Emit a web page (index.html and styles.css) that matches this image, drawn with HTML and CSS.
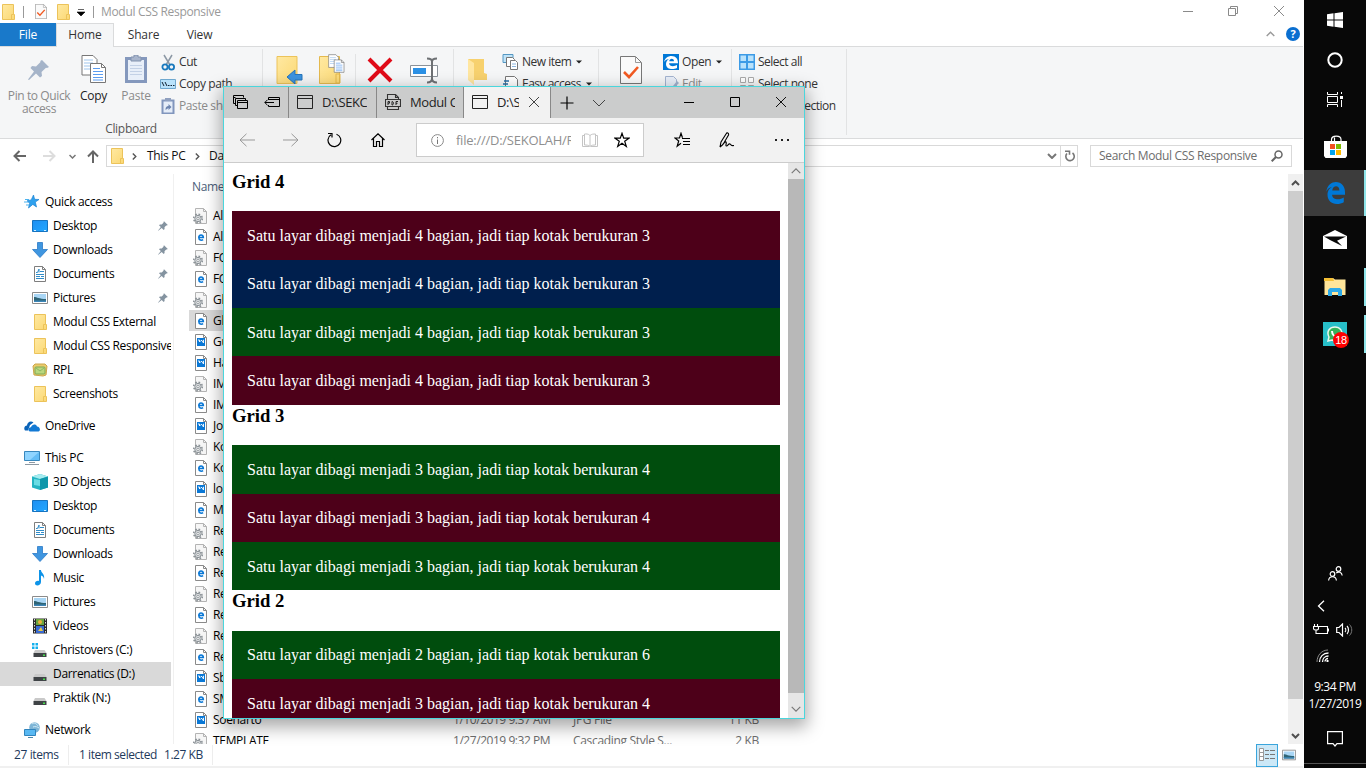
FILE: index.html
```html
<!DOCTYPE html>
<html lang="en">
<head>
<meta charset="utf-8">
<title>Modul CSS Responsive</title>
<link rel="stylesheet" href="styles.css">
</head>
<body>
<svg class="defs" width="0" height="0">
  <linearGradient id="gold" x1="0" y1="0" x2="1" y2="1"><stop offset="0" stop-color="#ffe9a2"/><stop offset="1" stop-color="#fbd873"/></linearGradient>
  <linearGradient id="blue" x1="0" y1="0" x2="1" y2="1"><stop offset="0" stop-color="#1d8ff2"/><stop offset="1" stop-color="#22a7ff"/></linearGradient>
  <symbol id="folder" viewBox="0 0 16 16"><path d="M2.500.5h11v10h1v5h-12z" fill="url(#gold)" stroke="#ecc35a"/><path d="M11.500 15V10.500h2" fill="none" stroke="#ecc35a"/></symbol>
  <symbol id="star" viewBox="0 0 16 16"><path d="M9.500 1l1.100 4.300 4.400.2-3.700 2.600 1.200 4.900-3.700-2.600L4.500 14l1.200-4.700L3 6.800l4.200-.9z" fill="#2ea1ee" stroke="#1b83d3" stroke-width=".7"/><path d="M1 5.500h4M0 8h4M2 11h3" stroke="#4cb2ee" fill="none"/></symbol>
  <symbol id="desk" viewBox="0 0 16 16"><path d="M.5 2.500h15v11H.5z" fill="url(#blue)" stroke="#1673bf"/><path d="M2 12.500h2M12 12.500h2" stroke="#d5efff"/></symbol>
  <symbol id="down" viewBox="0 0 16 16"><path d="M5.500.5h5v7h5L8 15.500.5 7.500h5z" fill="#3f96e0" stroke="#2b7ac6" stroke-width=".8"/></symbol>
  <symbol id="doc" viewBox="0 0 16 16"><path d="M2.500.5h8l3 3v12h-11z" fill="#fff" stroke="#7e7e7e"/><path d="M10.500.5v3h3" fill="none" stroke="#7e7e7e"/><path d="M4 6.500h1.500L7 3v3.500M8 5.500h4M4 8.500h8M4 10.500h4M4 12.500h8M9 10.500h3" stroke="#318cc8" fill="none"/></symbol>
  <symbol id="pic" viewBox="0 0 16 16"><path d="M.5 2.500h15v11H.5z" fill="#fff" stroke="#8b8b8b"/><path d="M2 4h12v8H2z" fill="#a9d6f5"/><path d="M2 7c3 0 5 2 12 2v3H2z" fill="#2f6475"/><path d="M2 10.500h12V12H2z" fill="#3c86b8"/></symbol>
  <symbol id="rpl" viewBox="0 0 16 16"><path d="M1 4l2-2h10l2 2-1 9-3 1-9-1z" fill="#eacb6c" stroke="#cca64a"/><rect x="3" y="5" width="10" height="7" rx="1" fill="#b9d77e" stroke="#7eaa55"/><path d="M4 6l4 3 4-3" fill="none" stroke="#8cb765"/></symbol>
  <symbol id="cloud" viewBox="0 0 16 16"><path d="M1 12.500C-.8 10 1 7.500 3 7.500 3 4 7 2 9.500 4.500L6 7l-2 5.500z" fill="#0a63b8"/><path d="M6 13.500C3.500 13 4 9 7 9.200 8 6 12 5.500 13 8.500c3 .2 4 4 1.500 5z" fill="#1279d4"/></symbol>
  <symbol id="pc" viewBox="0 0 16 16"><path d="M.5 1.500h15v9H.5z" fill="#64bdf6" stroke="#3887bd"/><path d="M1 2h14L6 10H1z" fill="#8fd4ff"/><path d="M1 14.500h14M5 12.500h6" stroke="#8d99a3"/></symbol>
  <symbol id="cube" viewBox="0 0 16 16"><path d="M8 0l8 2.500v11L8 16l-8-2.500v-11z" fill="#24b4c2"/><path d="M8 0l8 2.500L8 5 0 2.500z" fill="#a6ecf0"/><path d="M8 5l8-2.500v11L8 16z" fill="#0e97ab"/><path d="M2 5l6 1v6l-6-1z" fill="#69dce4"/></symbol>
  <symbol id="note" viewBox="0 0 16 16"><path d="M7 0h2c0 3 4 3.500 3 9-.5-2.500-1.500-3-3-3.500V12c0 4-6 4.500-6 1.500 0-2 2-3 4-2.500z" fill="#0d93e8"/></symbol>
  <symbol id="film" viewBox="0 0 16 16"><path d="M1 .5h14v15H1z" fill="#2a2a2a"/><path d="M4 1h8v6H4z" fill="#6aa43f"/><path d="M4 8h8v7H4z" fill="#376ad4"/><circle cx="8" cy="4" r="2" fill="#eab13b"/><path d="M6 13l3-4 2 4z" fill="#e6c64a"/><path d="M2.500 1v14M13.500 1v14" stroke="#ddd" stroke-dasharray="1.500 1.500"/></symbol>
  <symbol id="drive" viewBox="0 0 16 16"><path d="M3 7h9.500l2 3h-13z" fill="#c9c9c9"/><path d="M1.500 10h13v4h-13z" fill="#3f4346"/><path d="M11 11.500h2V13h-2z" fill="#47e04d"/></symbol>
  <symbol id="cdrive" viewBox="0 0 16 16"><use href="#drive"/><path d="M0 0h2.500v2.500H0zM3.500 0H6v2.500H3.500zM0 3.500h2.500V6H0zM3.500 3.500H6V6H3.500z" fill="#14b0ee"/></symbol>
  <symbol id="net" viewBox="0 0 16 16"><circle cx="10.500" cy="5.500" r="5.300" fill="#7eb5d6"/><path d="M8 2c2-2 5 0 6 2M9 5c2-1 5 0 6 1" stroke="#d3ebf5" fill="none"/><path d="M.5 7.500h11v6H.5z" fill="#58b8f2" stroke="#3184bd"/><path d="M4 15.500h5" stroke="#4a86aa"/></symbol>
  <symbol id="pin" viewBox="0 0 10 10"><path d="M6 .2L9.800 4l-1 .5-.6-.1-1.700 1.800.1 1.800-.9.900-2-2L.3 9.800l-.2-.2 2.700-3.600L1 4.200l.9-.8 1.800.1L5.500 1.800l0-.9z" fill="#8493a0"/></symbol>
  <symbol id="page" viewBox="0 0 16 16"><path d="M2.500.5h8l3 3v12h-11z" fill="#fff" stroke="#8a8a8a"/><path d="M10.500.5v3h3" fill="none" stroke="#8a8a8a"/></symbol>
  <symbol id="gear" viewBox="0 0 16 16"><path d="M2.500.5h8l3 3v12h-11z" fill="#f6f6f6" stroke="#b4b4b4"/><path d="M10.500.5v3h3" fill="none" stroke="#b4b4b4"/><circle cx="5" cy="10.500" r="4.300" fill="none" stroke="#8b9297" stroke-width="1.600" stroke-dasharray="1.700 1.677"/><circle cx="5" cy="10.500" r="3.200" fill="#d7dadc" stroke="#8b9297"/><circle cx="5" cy="10.500" r="1.200" fill="#fff" stroke="#8b9297" stroke-width=".8"/></symbol>
  <symbol id="ef" viewBox="0 0 16 16"><use href="#page"/><path d="M6.200 8.500h4.100C10.300 5 5.800 5.200 5.800 8.600c0 3 3 3 4.300 2" fill="none" stroke="#0a78d6" stroke-width="1.600"/></symbol>
  <symbol id="img" viewBox="0 0 16 16"><use href="#page"/><path d="M4 4h8v8H4z" fill="#0a78d6"/><path d="M5 6h1.500v2L8 6.500h1L10.500 9V6H11" fill="none" stroke="#fff" stroke-width=".9"/></symbol>
  <symbol id="edge" viewBox="0 0 24 24"><path d="M1.500 10.500C3 3 8 0 13 0c7 0 11 5 11 11v2.800H8.500c.3 3.700 3.600 5 6.800 5 2.800 0 5-.8 7.200-2v5.300c-2.500 1.400-5 1.900-8.200 1.900C7.500 24 3 20 3 14c0-4.500 2.700-7.500 6-8.700-4 .6-6.300 3-7.500 5.200zm7.200-1.300h8.600c0-6.600-8.200-5.700-8.600 0z" fill="#0078d7"/></symbol>
  <symbol id="caret" viewBox="0 0 6 4"><path d="M0 .5h6L3 3.500z" fill="#222"/></symbol>
  <symbol id="copies" viewBox="0 0 26 28"><path d="M1 .5h11l4 4V20H1z" fill="#fff" stroke="#777"/><path d="M3 5h9M3 8h9M3 11h9M3 14h9" stroke="#9fc5ec"/><path d="M9.500 8.500h11l4 4v15h-15z" fill="#fff" stroke="#777"/><path d="M20.500 8.500v4h4" fill="none" stroke="#777"/><path d="M12 13.500h7M12 16.500h10M12 19.500h10M12 22.500h10M12 25h10" stroke="#5a9cf0"/></symbol>
  <symbol id="win" viewBox="0 0 16 14"><path d="M.5.5h15v13H.5zM.5 3.500h15" fill="none" stroke="#222"/></symbol>
  <symbol id="x" viewBox="0 0 12 12"><path d="M1 1l10 10M11 1L1 11" fill="none" stroke="currentColor"/></symbol>
  <symbol id="right" viewBox="0 0 16 14"><path d="M0 7h15M8.500.8L15 7l-6.500 6.200" fill="none" stroke="currentColor"/></symbol>
  <symbol id="chev" viewBox="0 0 14 8"><path d="M1 1l6 6 6-6" fill="none" stroke="currentColor"/></symbol>
  <symbol id="sheet" viewBox="0 0 22 28"><path d="M.5.5h15l6 6v21H.5z" fill="#fafafa" stroke="#777"/><path d="M15.500.5v6h6" fill="none" stroke="#999"/><path d="M4 16l5 5 9-10" fill="none" stroke="#f15a22" stroke-width="2.600"/></symbol>
</svg>

<div class="screen">
<main class="explorer">
  <header class="title">
    <svg class="i16"><use href="#folder"/></svg><i class="bar"></i>
    <svg class="quick" width="12" height="15"><use href="#sheet"/></svg>
    <svg class="i16 qf"><use href="#folder"/></svg>
    <svg class="more" width="8" height="7" viewBox="0 0 8 7"><path d="M1 .5h6M0 3h8L4 7z" stroke="#000" stroke-width=".6"/></svg><i class="bar b2"></i>
    <span class="t-title">Modul CSS Responsive</span>
    <span class="wbtns"><svg width="10" height="10"><path d="M0 5.500h10" stroke="#8a8a8a"/></svg><svg width="10" height="10"><path d="M.5 2.500h7v7h-7zM2.500 2.500v-2h7v7h-2" fill="none" stroke="#8a8a8a"/></svg><svg width="12" height="12" class="grey"><use href="#x"/></svg></span>
  </header>
  <nav class="tabs">
    <span class="file">File</span><span class="home">Home</span><span class="share">Share</span><span class="view">View</span>
    <span class="help"><svg width="9" height="6" viewBox="0 0 9 6"><path d="M.7 5L4.500 1.200 8.300 5" fill="none" stroke="#999" stroke-width="1.400"/></svg><b>?</b></span>
  </nav>
  <section class="ribbon">
    <div class="clip">
      <div class="tools">
        <div class="big pinq dim"><svg width="22" height="28" viewBox="0 0 22 28"><path d="M14 5l7 7-2 1-1-.3-4.500 4.300.5 4-2 1.500-4-4L1 25l-1-.5 6-8L2.500 13l1.500-2 4 .5L12.500 7l-.2-1z" fill="#a5b4c9"/></svg><span>Pin to Quick<br>access</span></div>
        <div class="big cp"><svg width="26" height="28"><use href="#copies"/></svg><span>Copy</span></div>
        <div class="big ps dim"><svg width="22" height="28" viewBox="0 0 22 28"><path d="M1.500 3.500h19v23h-19z" fill="#fff" stroke="#8498bd" stroke-width="3"/><path d="M3 5h16v20H3z" fill="#e8eff9"/><path d="M6 2h3V0h4v2h3v4H6z" fill="#a8b5cc" stroke="#8192ae"/><path d="M5 10.500h12M5 13.500h12M5 16.500h12M5 19.500h12" stroke="#c3d1e6"/></svg><span>Paste</span></div>
        <div class="small s1">
          <span><svg width="16" height="17" viewBox="0 0 16 17"><path d="M4 1l6 10M12 1L6 11" stroke="#8c98a5" stroke-width="1.500"/><circle cx="5" cy="13" r="2.600" fill="none" stroke="#1979bd" stroke-width="1.800"/><circle cx="11.500" cy="13" r="2.600" fill="none" stroke="#1979bd" stroke-width="1.800"/></svg>Cut</span>
          <span><svg width="16" height="16" viewBox="0 0 16 16"><path d="M.5 3.500h15v9H.5z" fill="#b8e2fb" stroke="#6fa8cf"/><path d="M2 6l2 4M5 6l2 4M8 9.500h1.500M10.500 9.500H12M13 9.500h1.500" stroke="#123"/></svg>Copy path</span>
          <span class="dim"><svg width="16" height="16" viewBox="0 0 16 16"><path d="M2.500 2.500h11v13h-11z" fill="#e5edf8" stroke="#8196bd" stroke-width="2"/><path d="M5 0h6v3H5z" fill="#8fa0bf"/><path d="M5.500 12c0-3 1-4 3-4V6l3 3-3 3v-2" fill="#6d85b0"/></svg>Paste shortcut</span>
        </div>
      </div>
      <span class="glabel">Clipboard</span>
    </div>
    <div class="org">
      <svg class="mv" width="28" height="28" viewBox="0 0 28 28"><path d="M1 .5h20v27H1z" fill="url(#gold)" stroke="#ecc35a"/><path d="M11 21l8-7v4.500h7v5.500h-7v4z" fill="#3c93e0" stroke="#2674bb"/></svg>
      <svg class="ct" width="27" height="30" viewBox="0 0 27 30"><path d="M.5 2.500h20v27H.5zM17 20h4v9h-4z" fill="url(#gold)" stroke="#e4b94e"/><svg x="9" y="0" width="17" height="19"><use href="#copies"/></svg></svg>
      <i class="vs"></i>
      <svg class="del" width="26" height="26" viewBox="0 0 26 26"><path d="M2 2l22 22M24 2L2 24" stroke="#e00b18" stroke-width="4"/></svg>
      <svg class="ren" width="28" height="27" viewBox="0 0 28 27"><path d="M.5 8.500h27v11H.5z" fill="#fff" stroke="#8b9299"/><path d="M3 11h13v6H3z" fill="#2c91e5"/><path d="M17 1.500c3 0 5 .5 5 3v17c0 3-2 4-5 4M27 1.500c-3 0-5 .5-5 3v17c0 3 2 4 5 4" fill="none" stroke="#6e7174" stroke-width="2"/></svg>
    </div>
    <div class="new">
      <svg class="nf" width="19" height="28" viewBox="0 0 19 28"><path d="M0 2h16v14l3 1v6H4z" fill="#f7d16e"/><path d="M0 2l6 4v22l-6-5z" fill="#ffe6a0"/></svg>
      <div class="small"><span><svg width="17" height="16" viewBox="0 0 17 16"><path d="M1 .5h10v8H1z" fill="#bfe3f8" stroke="#5497c2"/><path d="M4.500 3.500h6l2 2v7h-8z" fill="#fff" stroke="#777"/><path d="M8.500 6.500h5l2 2v7h-7z" fill="#fff" stroke="#777"/><path d="M10 10h4M10 12.500h4" stroke="#8ab4dd"/></svg>New item<svg class="car"><use href="#caret"/></svg></span><span><svg width="17" height="16" viewBox="0 0 17 16"><path d="M3.500.5h9l3 3v12h-12z" fill="#fff" stroke="#777"/><path d="M2 5h5M1 8h5M0 11h4" stroke="#246da8" stroke-width="1.300"/></svg>Easy access<svg class="car"><use href="#caret"/></svg></span></div>
    </div>
    <div class="opn">
      <svg class="pr" width="22" height="28"><use href="#sheet"/></svg>
      <div class="small"><span><svg width="16" height="16" viewBox="0 0 16 16"><path d="M0 0h16v16H0z" fill="#0078d7"/><path d="M1 8C2 4 5 2 8.500 2 13 2 15 5 15 9.300H6c.3 3.300 5 3.600 8 1.700v3c-4 2-11 1.600-11-4 0-3 2-4.700 4-5.200C4 5 2 6.500 1 8zm5.200-.8H11c0-3.400-4.500-3.200-4.800 0z" fill="#fff"/></svg>Open<svg class="car"><use href="#caret"/></svg></span><span class="dim"><svg width="16" height="16" viewBox="0 0 16 16"><path d="M2.500.5h8l3 3v12h-11z" fill="#e8eef8" stroke="#a3b3cf"/><path d="M14 5l2 2-7 7-3 1z" fill="#a3b3cf"/></svg>Edit</span></div>
    </div>
    <div class="sel">
      <div class="small"><span><svg width="16" height="16" viewBox="0 0 16 16"><path d="M0 0h16v16H0z" fill="#3c9be6"/><path d="M1.500 1.500h5.500v5.500H1.500zM9 1.500h5.500v5.500H9zM1.500 9h5.500v5.500H1.500zM9 9h5.500v5.500H9z" fill="#b9e2fb"/></svg>Select all</span><span><svg width="16" height="16" viewBox="0 0 16 16"><path d="M1.500 1.500h5v5h-5zM9.500 1.500h5v5h-5zM1.500 9.500h5v5h-5zM9.500 9.500h5v5h-5z" fill="#fff" stroke="#aaa"/></svg>Select none</span><span><svg width="16" height="16"></svg>Invert selection</span></div>
    </div>
  </section>
  <section class="addr">
    <svg class="a1" width="13" height="12" viewBox="0 0 13 12"><path d="M13 6H1.500M6.500 1l-5 5 5 5" fill="none" stroke="#666" stroke-width="2"/></svg>
    <svg class="a2" width="13" height="12" viewBox="0 0 13 12"><path d="M0 6h11.500M6.500 1l5 5-5 5" fill="none" stroke="#ddd" stroke-width="2"/></svg>
    <svg class="a3" width="7" height="5" viewBox="0 0 7 5"><path d="M.5 1l3 3 3-3" fill="none" stroke="#777" stroke-width="1.500"/></svg>
    <svg class="a4" width="12" height="13" viewBox="0 0 12 13"><path d="M6 13V2M1 6.500l5-5 5 5" fill="none" stroke="#666" stroke-width="2"/></svg>
    <div class="path"><svg class="i16"><use href="#folder"/></svg><svg class="gt" width="5" height="7" viewBox="0 0 5 7"><path d="M.8.5l3 3-3 3" fill="none" stroke="#555" stroke-width="1.400"/></svg><span class="thispc">This PC</span><svg class="gt2" width="5" height="7" viewBox="0 0 5 7"><path d="M.8.5l3 3-3 3" fill="none" stroke="#555" stroke-width="1.400"/></svg><span>Darrenatics (D:)</span><span class="refresh"><svg width="10" height="6" viewBox="0 0 10 6"><path d="M1 1l4 4 4-4" fill="none" stroke="#777" stroke-width="2"/></svg><i></i><svg width="10" height="12" viewBox="0 0 10 12"><path d="M7.500 3A4.200 4.200 0 1 1 2 3.500M0 1.300h4.500v3.500" fill="none" stroke="#777" stroke-width="1.600"/></svg></span></div>
    <div class="search"><span>Search Modul CSS Responsive</span><svg width="12" height="12" viewBox="0 0 12 12"><circle cx="7.500" cy="4.500" r="3.500" fill="none" stroke="#666" stroke-width="1.500"/><path d="M5 7L.7 11.300" stroke="#666" stroke-width="2"/></svg></div>
  </section>
  <section class="body">
    <aside class="side">
      <a class="top"><svg class="i16"><use href="#star"/></svg>Quick access</a>
      <a><svg class="i16"><use href="#desk"/></svg>Desktop<svg class="pn"><use href="#pin"/></svg></a>
      <a><svg class="i16"><use href="#down"/></svg>Downloads<svg class="pn"><use href="#pin"/></svg></a>
      <a><svg class="i16"><use href="#doc"/></svg>Documents<svg class="pn"><use href="#pin"/></svg></a>
      <a><svg class="i16"><use href="#pic"/></svg>Pictures<svg class="pn"><use href="#pin"/></svg></a>
      <a><svg class="i16"><use href="#folder"/></svg>Modul CSS External</a>
      <a><svg class="i16"><use href="#folder"/></svg>Modul CSS Responsive</a>
      <a><svg class="i16"><use href="#rpl"/></svg>RPL</a>
      <a><svg class="i16"><use href="#folder"/></svg>Screenshots</a>
      <a class="top gap"><svg class="i16"><use href="#cloud"/></svg>OneDrive</a>
      <a class="top gap"><svg class="i16"><use href="#pc"/></svg>This PC</a>
      <a><svg class="i16"><use href="#cube"/></svg>3D Objects</a>
      <a><svg class="i16"><use href="#desk"/></svg>Desktop</a>
      <a><svg class="i16"><use href="#doc"/></svg>Documents</a>
      <a><svg class="i16"><use href="#down"/></svg>Downloads</a>
      <a><svg class="i16"><use href="#note"/></svg>Music</a>
      <a><svg class="i16"><use href="#pic"/></svg>Pictures</a>
      <a><svg class="i16"><use href="#film"/></svg>Videos</a>
      <a><svg class="i16 low"><use href="#cdrive"/></svg>Christovers (C:)</a>
      <a class="on"><svg class="i16 low"><use href="#drive"/></svg>Darrenatics (D:)</a>
      <a><svg class="i16 low"><use href="#drive"/></svg>Praktik (N:)</a>
      <a class="top gap"><svg class="i16"><use href="#net"/></svg>Network</a>
    </aside>
    <div class="list">
      <div class="head">Name</div>
      <div class="row"><svg class="i16"><use href="#gear"/></svg>Al</div>
      <div class="row"><svg class="i16"><use href="#ef"/></svg>Al</div>
      <div class="row"><svg class="i16"><use href="#gear"/></svg>FO</div>
      <div class="row"><svg class="i16"><use href="#ef"/></svg>FO</div>
      <div class="row"><svg class="i16"><use href="#gear"/></svg>Gl</div>
      <div class="row on"><svg class="i16"><use href="#ef"/></svg>Gl</div>
      <div class="row"><svg class="i16"><use href="#img"/></svg>Gu</div>
      <div class="row"><svg class="i16"><use href="#img"/></svg>Ha</div>
      <div class="row"><svg class="i16"><use href="#gear"/></svg>IM</div>
      <div class="row"><svg class="i16"><use href="#ef"/></svg>IM</div>
      <div class="row"><svg class="i16"><use href="#img"/></svg>Jo</div>
      <div class="row"><svg class="i16"><use href="#gear"/></svg>Ko</div>
      <div class="row"><svg class="i16"><use href="#ef"/></svg>Ko</div>
      <div class="row"><svg class="i16"><use href="#img"/></svg>lo</div>
      <div class="row"><svg class="i16"><use href="#ef"/></svg>M</div>
      <div class="row"><svg class="i16"><use href="#gear"/></svg>Re</div>
      <div class="row"><svg class="i16"><use href="#gear"/></svg>Re</div>
      <div class="row"><svg class="i16"><use href="#ef"/></svg>Re</div>
      <div class="row"><svg class="i16"><use href="#gear"/></svg>Re</div>
      <div class="row"><svg class="i16"><use href="#ef"/></svg>Re</div>
      <div class="row"><svg class="i16"><use href="#gear"/></svg>Re</div>
      <div class="row"><svg class="i16"><use href="#ef"/></svg>Re</div>
      <div class="row"><svg class="i16"><use href="#img"/></svg>Sb</div>
      <div class="row"><svg class="i16"><use href="#ef"/></svg>SM</div>
      <div class="row"><svg class="i16"><use href="#img"/></svg><span class="n">Soenarto</span><span class="d">1/10/2019 9:37 AM</span><span class="ty">JPG File</span><span class="sz">11 KB</span></div>
      <div class="row"><svg class="i16"><use href="#gear"/></svg><span class="n">TEMPLATE</span><span class="d">1/27/2019 9:32 PM</span><span class="ty">Cascading Style S...</span><span class="sz">2 KB</span></div>
    </div>
    <div class="scroll"><svg width="9" height="6" viewBox="0 0 9 6"><path d="M1 5l3.500-3.500L8 5" fill="none" stroke="#505050" stroke-width="2"/></svg><i></i><svg width="9" height="6" viewBox="0 0 9 6"><path d="M1 1l3.500 3.500L8 1" fill="none" stroke="#505050" stroke-width="2"/></svg></div>
  </section>
  <footer class="status">
    <span class="st1">27 items</span><i></i><span class="st2">1 item selected</span><span class="st3">1.27 KB</span><i></i>
    <span class="vbtns"><b><svg width="16" height="14" viewBox="0 0 16 14"><path d="M.5.5h4v12h-4zM.5 4.500h4M.5 8.500h4" fill="#fff" stroke="#999"/><path d="M6 2.500h4M11 2.500h5M6 6.500h4M11 6.500h5M6 10.500h4M11 10.500h5" stroke="#777"/></svg></b><svg class="th" width="14" height="14"><use href="#pic"/></svg></span>
  </footer>
</main>

<aside class="taskbar">
  <div class="s40"><svg width="16" height="16" viewBox="0 0 16 16"><path d="M0 2.200L6.500 1.300v6.200H0zM7.500 1.200L16 0v7.500H7.500zM0 8.500h6.500v6.200L0 13.800zM7.500 8.500H16V16l-8.500-1.200z" fill="#fff"/></svg></div>
  <div class="s40"><svg width="16" height="16"><circle cx="8" cy="8" r="6.700" fill="none" stroke="#fff" stroke-width="2"/></svg></div>
  <div class="s43"><svg width="16" height="15" viewBox="0 0 16 15"><path d="M.5 0v2.500h10V0M.5 4.500h10v6H.5zM.5 15v-2.500h10V15M14.500 0v2M14.500 8v7" fill="none" stroke="#fff"/><path d="M13 4h3v3h-3z" fill="#fff"/></svg></div>
  <div class="s47"><svg width="23" height="23" viewBox="0 0 23 23"><path d="M7.500 6V4.500C7.500 0 17 0 17 4.500V6M10.500 6V2.500" fill="none" stroke="#fff" stroke-width="1.200"/><path d="M0 6h23v15l-1.500 2h-20L0 21z" fill="#fff"/><path d="M6 9h5v5H6z" fill="#f25022"/><path d="M12 9h5v5h-5z" fill="#7fba00"/><path d="M6 15h5v5H6z" fill="#00a4ef"/><path d="M12 15h5v5h-5z" fill="#ffb900"/></svg></div>
  <div class="s47 act strip"><svg width="20" height="22" viewBox="0 0 24 24" preserveAspectRatio="none"><use href="#edge"/></svg></div>
  <div class="s47"><svg width="24" height="20" viewBox="0 0 24 20"><path d="M0 6l12-6 12 6v13H0z" fill="#fff"/><path d="M1 6.500h22l-9 4.200 5 5.300L7 10z" fill="#080808"/></svg></div>
  <div class="s47 run"><svg width="22" height="18" viewBox="0 0 22 18"><path d="M.5 0H9l2 1.500h10.500V17H.5z" fill="#ffe59a"/><path d="M0 0h9l1 3H0z" fill="#f4bf35"/><path d="M4 18v-6l2-2h10l2 2v6h-4v-4H8v4z" fill="#2da9e8"/></svg></div>
  <div class="s47 run"><div class="wa"><svg width="24" height="24" viewBox="0 0 24 24"><path d="M5 19l1-4C3 9 7 5 12 5s8 4 7 9c-1 4-6 6-10 4z" fill="#35b35a" stroke="#e9f8ee" stroke-width="1.500"/><path d="M9 9c0 4 3 6 6 6" stroke="#fff" stroke-width="2" fill="none"/></svg><b>18</b></div></div>
  <div class="tray">
    <svg class="people" width="15" height="15" viewBox="0 0 15 15"><circle cx="4.500" cy="8" r="2.300" fill="none" stroke="#fff" stroke-width="1.200"/><path d="M.6 14.500c.4-5 7.400-5 7.800 0M8.300 7c2-1.700 5.500-1 5.900 2.500" fill="none" stroke="#fff" stroke-width="1.200"/><circle cx="10.500" cy="3" r="2.300" fill="none" stroke="#fff" stroke-width="1.200"/></svg>
    <svg class="lt" width="8" height="12" viewBox="0 0 8 12"><path d="M7 .7L1.500 6 7 11.300" fill="none" stroke="#fff" stroke-width="1.300"/></svg>
    <div class="bs"><svg width="16" height="12" viewBox="0 0 16 12"><path d="M5 2.500h9.500v7H4.500M15.500 4.500v3M1.500 0v3M4.500 0v3M.5 2.500h5v2c0 2-5 2-5 0zM3 6v3.500h2" fill="none" stroke="#fff" stroke-width="1.100"/></svg><svg width="17" height="14" viewBox="0 0 17 14"><path d="M.7 4.500H3L6.500 1v12L3 9.500H.7zM9 5c1 1 1 3 0 4M11 3c2 2 2 6 0 8" fill="none" stroke="#fff" stroke-width="1.200"/><path d="M13.500 1.500c3 3 3 8 0 11" fill="none" stroke="#777"/></svg></div>
    <svg class="wifi" width="13" height="13" viewBox="0 0 13 13"><path d="M1 13C1 6 6 1 12 1" fill="none" stroke="#888"/><path d="M3.500 13c0-5 3.500-9 9-9M6.500 13c0-3.500 2.500-6 6-6M9 12.500C9 11 10.500 9.500 12 9.500" fill="none" stroke="#fff" stroke-width="1.300"/><path d="M10.500 11h2v2h-2z" fill="#fff"/></svg>
    <span class="time">9:34 PM</span><span class="date">1/27/2019</span>
    <svg class="act-c" width="16" height="17" viewBox="0 0 16 17"><path d="M.6.6h14.800v12H10L8 15l-2-2.400H.6z" fill="none" stroke="#fff" stroke-width="1.200"/></svg>
  </div>
</aside>

<article class="edge">
  <div class="etabs">
    <div class="pre"><svg width="15" height="15" viewBox="0 0 15 15"><path d="M2.500 8.500h-2v-8h10v2M.5 2.500h2" fill="none" stroke="#000"/><path d="M4.500 10.500h-2v-7h10v2M4.500 5.500h10v8h-10zM4.500 7.500h10" fill="none" stroke="#000"/></svg><svg width="16" height="11" viewBox="0 0 16 11"><path d="M4.500 3V.5h11v9h-11V8M4.500 2.500h11M10 5.500H.8M3.500 2.800L.8 5.500l2.700 2.700" fill="none" stroke="#000"/></svg></div>
    <div class="tab t1"><svg width="16" height="14"><use href="#win"/></svg><span>D:\SEKC</span></div>
    <div class="tab"><svg width="16" height="16" viewBox="0 0 16 16"><path d="M2.500 5V.5h8l3 3V5M10.500.5v3h3M.5 5.500h15v7H.5zM2.500 13v2.500h11V13" fill="none" stroke="#333" stroke-width="1.100"/><path d="M3 11V7.500h1.500v1.700H3M7 7.500V11c2 0 2-3.500 0-3.500M11 11V7.500h2M11 9.300h1.500" fill="none" stroke="#222"/></svg><span>Modul CSS</span></div>
    <div class="tab cur"><svg width="16" height="14"><use href="#win"/></svg><span>D:\SEK</span><svg class="cx" width="12" height="12"><use href="#x"/></svg></div>
    <div class="post"><svg width="14" height="14"><path d="M7 .5v13M.5 7h13" stroke="#000" stroke-width="1.200"/></svg><svg class="dd" width="14" height="8"><use href="#chev"/></svg><svg class="mn" width="10" height="10"><path d="M0 4.500h10" stroke="#000"/></svg><svg class="mx" width="10" height="10"><path d="M.5.5h9v9h-9z" fill="none" stroke="#000"/></svg><svg class="cl" width="12" height="12"><use href="#x"/></svg></div>
  </div>
  <div class="etool">
    <svg class="back" width="16" height="14"><use href="#right"/></svg>
    <svg class="fwd" width="16" height="14"><use href="#right"/></svg>
    <svg class="rel" width="15" height="16" viewBox="0 0 15 16"><path d="M9.500 2.200A6.400 6.400 0 1 1 4 2.800M1 1.500h4v4" fill="none" stroke="#000" stroke-width="1.200"/></svg>
    <svg class="hm" width="14" height="14" viewBox="0 0 14 14"><path d="M.5 7L7 .8 13.500 7M2.500 5.500v8h3v-5h3v5h3v-8" fill="none" stroke="#000" stroke-width="1.200"/></svg>
    <div class="url"><svg width="13" height="13" viewBox="0 0 13 13"><circle cx="6.500" cy="6.500" r="5.900" fill="none" stroke="#8a8a8a"/><path d="M6.500 5.500V10M6.500 3v1.300" stroke="#777"/></svg><span>file:///D:/SEKOLAH/RPL</span><svg class="bk" width="16" height="15" viewBox="0 0 16 15"><path d="M8 2.500C6 .5 4 1 2.500 1v11c2 0 4 0 5.500 1.500C9.500 12 11.500 12 13.500 12V1c-2 0-4 0-5.500 1.500zv11M2.500 2.500h-2v11h6.500M13.500 2.500h2v11H9" fill="#fff" stroke="#c4c4c4"/></svg><svg class="sr" width="16" height="16" viewBox="0 0 16 16"><path d="M8 1.300l1.700 4.900h5.200l-4.200 3.100 1.600 5.100L8 11.300l-4.300 3.100 1.600-5.100L1.100 6.200h5.200z" fill="none" stroke="#000" stroke-width="1.200"/></svg></div>
    <svg class="hub" width="16" height="16" viewBox="0 0 16 16"><path d="M8.500 5.800L7 1.300 5.500 6H.9l3.800 3-1.500 5.200L7 11.300M8 6.500h8M9 9.500h7M9 12.500h7" fill="none" stroke="#000" stroke-width="1.200"/></svg>
    <svg class="pen" width="16" height="16" viewBox="0 0 16 16"><path d="M1 15l1-5 5-8c1-2 3-1 2.500 1L4 12.500 1 15c3-1 4-6 6-5 1 1-1 4 .5 4 1.500 0 2-3 3.500-2s1 2 4 1.500" fill="none" stroke="#000" stroke-width="1.100"/></svg>
    <span class="dots"><i></i><i></i><i></i></span>
  </div>
  <div class="page">
    <div class="doc">
      <h3>Grid 4</h3>
      <p class="r">Satu layar dibagi menjadi 4 bagian, jadi tiap kotak berukuran 3</p>
      <p class="b">Satu layar dibagi menjadi 4 bagian, jadi tiap kotak berukuran 3</p>
      <p class="g">Satu layar dibagi menjadi 4 bagian, jadi tiap kotak berukuran 3</p>
      <p class="r">Satu layar dibagi menjadi 4 bagian, jadi tiap kotak berukuran 3</p>
      <h3>Grid 3</h3>
      <p class="g">Satu layar dibagi menjadi 3 bagian, jadi tiap kotak berukuran 4</p>
      <p class="r">Satu layar dibagi menjadi 3 bagian, jadi tiap kotak berukuran 4</p>
      <p class="g">Satu layar dibagi menjadi 3 bagian, jadi tiap kotak berukuran 4</p>
      <h3>Grid 2</h3>
      <p class="g">Satu layar dibagi menjadi 2 bagian, jadi tiap kotak berukuran 6</p>
      <p class="r">Satu layar dibagi menjadi 3 bagian, jadi tiap kotak berukuran 4</p>
    </div>
    <div class="escroll"><svg width="10" height="6" viewBox="0 0 14 8"><path d="M1 7l6-6 6 6" fill="none" stroke="#777" stroke-width="1.600"/></svg><i></i><svg width="10" height="6" viewBox="0 0 14 8"><path d="M1 1l6 6 6-6" fill="none" stroke="#777" stroke-width="1.600"/></svg></div>
  </div>
</article>
</div>
</body>
</html>
```
FILE: styles.css
```css
* { box-sizing: border-box; }
body { margin: 0; overflow: hidden; font: 12px/16px "Open Sans", "Noto Sans", sans-serif; letter-spacing: -.32px; color: #111; }
svg { display: block; flex: none; }
.defs { position: absolute; }
.i16 { width: 16px; height: 16px; }
.dim { color: #8b8b8b !important; }
.grey { color: #8a8a8a; }
.screen { position: relative; display: flex; width: 1366px; height: 768px; overflow: hidden; background: #fff; }
.explorer { width: 1304px; display: flex; flex-direction: column; background: #fff; border-right: 1px solid #fff; }

.title { height: 23px; display: flex; align-items: center; padding-left: 0; }
.bar { width: 1px; height: 12px; background: #999; margin: 0 11px 0 7px; }
.title .i16, .quick { margin-top: 0; }
.title .qf { margin-left: 8px; }
.more { margin: 2px 0 0 6px; }
.b2 { margin: 0 7px 0 8px; }
.t-title { color: #999; letter-spacing: -.32px; }
.wbtns { margin-left: auto; display: flex; align-items: center; gap: 35px; padding: 0 18px 2px 0; }

.tabs { height: 24px; display: flex; border-bottom: 1px solid #dadbdc; line-height: 24px; color: #333; letter-spacing: -.15px; }
.file { width: 56px; background: #1979ca; color: #fff; text-align: center; height: 23px; }
.home { width: 58px; height: 24px; background: #f5f6f7; border: 1px solid #dadbdc; border-bottom: 0; text-align: center; line-height: 22px; }
.share { width: 59px; text-align: center; }
.view { width: 53px; text-align: center; }
.help { margin-left: auto; display: flex; align-items: center; gap: 11px; padding: 0 3px 2px 0; }
.help b { width: 14px; height: 14px; border-radius: 7px; background: #0b6fd0; color: #fff; font-size: 11px; line-height: 14px; text-align: center; }

.ribbon { height: 92px; display: flex; background: #f5f6f7; border-bottom: 1px solid #dadbdc; color: #333; padding-top: 2px; letter-spacing: -.25px; }
.ribbon > div { border-right: 1px solid #e2e3e4; height: 86px; }
.clip { width: 263px; display: flex; flex-direction: column; }
.tools { display: flex; flex: none; height: 72px; padding-top: 6px; }
.big { display: flex; flex-direction: column; align-items: center; text-align: center; color: #222; line-height: 13px; gap: 6px; white-space: nowrap; }
.pinq { width: 78px; letter-spacing: -.4px; }
.cp { width: 31px; }
.ps { width: 54px; }
.small { display: flex; flex-direction: column; width: max-content; white-space: nowrap; }
.small span { display: flex; align-items: center; gap: 3px; height: 22px; }
.s1 { margin: -4px 0 0 -3px; letter-spacing: -.4px; }
.glabel { width: 262px; text-align: center; color: #555; line-height: 15px; letter-spacing: -.3px; }
.small .car { width: 6px; height: 4px; margin: 0 0 0 2px; }
.org { width: 191px; display: flex; padding: 5px 0 0 13px; align-items: flex-start; }
.mv { margin-top: 2px; }
.ct { margin-left: 15px; }
.vs { width: 1px; height: 80px; background: #e2e3e4; margin: 0 11px 0 9px; }
.del { margin-top: 3px; }
.ren { margin: 3px 0 0 17px; }
.new { width: 145px; display: flex; padding: 2px 0 0 14px; }
.new .small { letter-spacing: -.5px; }
.nf { margin: 6px 15px 0 0; }
.opn { width: 133px; display: flex; padding: 2px 0 0 21px; letter-spacing: -.4px; }
.pr { margin: 5px 21px 0 0; }
.sel { width: 115px; padding: 2px 0 0 7px; letter-spacing: -.5px; }

.addr { height: 35px; display: flex; align-items: center; color: #111; padding-bottom: 1px; }
.a1 { margin-left: 13px; } .a2 { margin-left: 17px; } .a3 { margin-left: 13px; } .a4 { margin-left: 11px; }
.path { width: 972px; margin-left: 7px; height: 22px; border: 1px solid #d9d9d9; display: flex; align-items: center; padding-left: 2px; }
.gt { margin: 0 10px 0 7px; }
.thispc { width: 41px; }
.gt2 { margin: 0 9px 0 7px; }
.refresh { margin-left: auto; display: flex; align-items: center; height: 20px; padding-right: 2px; }
.refresh i { width: 1px; height: 20px; background: #d9d9d9; margin: 0 4px 0 3px; }
.search { width: 202px; margin-left: 12px; height: 22px; border: 1px solid #d9d9d9; display: flex; align-items: center; justify-content: space-between; padding: 0 8px 0 8px; color: #6d6d6d; white-space: nowrap; letter-spacing: -.34px; }

.body { height: 570px; display: flex; }
.side { width: 174px; border-right: 1px solid #f0f0f0; padding-top: 16px; color: #000; }
.side a { display: flex; align-items: center; height: 24px; width: 171px; padding-left: 32px; gap: 5px; white-space: nowrap; overflow: hidden; }
.side .low { margin-top: 2px; }
.side .top { padding-left: 24px; }
.side .gap { margin-top: 8px; }
.side .pn { width: 10px; height: 10px; margin: 0 3px 0 auto; }
.side .on, .row.on { background: #d9d9d9; }
.list { flex: 1; padding-left: 15px; overflow: hidden; color: #000; }
.head { height: 31px; padding: 5px 0 0 3px; color: #4c607a; }
.row { height: 21px; width: 600px; display: flex; align-items: center; gap: 4px; padding-left: 4px; white-space: nowrap; }
.n { width: 236px; } .d, .ty, .sz { color: #6d6d6d; } .d { width: 116px; letter-spacing: -.45px; } .ty { width: 120px; } .sz { width: 62px; text-align: right; }
.scroll { width: 15px; background: #f0f0f0; display: flex; flex-direction: column; align-items: center; padding: 6px 0 5px; }
.scroll i { width: 15px; height: 508px; background: #cdcdcd; margin: 5px 0 auto; }
.status { height: 24px; display: flex; align-items: center; padding-left: 14px; color: #1e395b; border-bottom: 2px solid #f0f0f0; letter-spacing: -.45px; }
.status i { width: 1px; height: 20px; background: #ededed; }
.st1 { width: 54px; letter-spacing: -.4px; } .st2 { width: 85px; margin-left: 10px; } .st3 { width: 48px; }
.vbtns { margin-left: auto; display: flex; align-items: center; padding-right: 7px; gap: 4px; }
.vbtns b { width: 22px; height: 23px; background: #cce8f7; border: 1px solid #3aa5dc; display: grid; place-items: center; }

.taskbar { width: 62px; background: #080808; display: flex; flex-direction: column; color: #fff; }
.taskbar > div { display: flex; align-items: center; justify-content: center; }
.s40 { height: 40px; } .s43 { height: 39px; margin-bottom: 4px; } .s47 { height: 47px; }
.act { background: #3c3c3c; height: 46px !important; border-right: 2px solid #8fe5ea; padding-left: 2px; }
.run { background: linear-gradient(#8fe5ea, #8fe5ea) right center / 2px 38px no-repeat; }
.wa { position: relative; width: 24px; height: 24px; background: #27bfc9; }
.wa b { position: absolute; left: 10px; top: 10px; width: 16px; height: 16px; border-radius: 8px; background: #f00; font: 11px/16px "Liberation Sans", sans-serif; text-align: center; }
.taskbar > .tray { margin-top: auto; height: 198px; flex-direction: column; justify-content: flex-start; letter-spacing: -.45px; }
.lt { margin: 19px 0 0 -29px; }
.bs { display: flex; gap: 7px; margin: 11px 4px 0 0; align-items: center; }
.wifi { margin: 12px 0 0 -25px; }
.time { margin-top: 17px; } .date { margin-top: 1px; }
.act-c { margin-top: 19px; }
.tray { border-bottom: 1px solid #555; margin-bottom: 4px; }

.edge { position: absolute; left: 223px; top: 86px; width: 582px; height: 633px; border: 1px solid #4bd6dc; background: #fff; box-shadow: 0 6px 16px 2px rgba(0,0,0,.34); display: flex; flex-direction: column; color: #111; }
.etabs { height: 31px; display: flex; background: #cbcccc; }
.pre { width: 64px; display: flex; align-items: center; justify-content: space-between; padding: 0 8px 0 9px; }
.tab { width: 87px; border-left: 1px solid #888; display: flex; align-items: center; padding: 0 0 2px 8px; gap: 9px; font-size: 13px; white-space: nowrap; }
.t1 { width: 88px; }
.tab span { width: 45px; overflow: hidden; color: #222; letter-spacing: -.4px; }
.cur { width: 88px; background: #f2f2f2; border-right: 1px solid #888; }
.cur span { width: 22px; }
.tab .cx { color: #444; }
.post { flex: 1; display: flex; align-items: center; padding-left: 9px; }
.dd { margin-left: 18px; color: #444; } .mn { margin-left: 78px; } .mx { margin-left: 36px; } .cl { margin-left: 35px; }
.mx, .cl { margin-top: -1px; }
.etool { height: 45px; background: #f2f2f2; border-bottom: 1px solid #ccc; display: flex; align-items: center; }
.back { margin-left: 15px; transform: scaleX(-1); color: #999; } .fwd { margin-left: 28px; color: #999; }
.rel { margin-left: 28px; } .hm { margin-left: 29px; }
.url { width: 228px; height: 34px; margin-left: 31px; background: #fff; border: 1px solid #ccc; display: flex; align-items: center; padding-left: 14px; font-size: 13px; color: #8f8f8f; }
.url span { width: 115px; margin: 0 11px 0 12px; overflow: hidden; white-space: nowrap; letter-spacing: -.25px; }
.sr { margin-left: 16px; }
.hub { margin-left: 30px; } .pen { margin-left: 29px; }
.dots { margin-left: 40px; display: flex; gap: 4px; }
.dots i { width: 2px; height: 2px; background: #222; }
.page { flex: 1; display: flex; min-height: 0; }
.doc { width: 564px; padding: 7.8px 8px 0; overflow: hidden; font: 16px/18.4px "Liberation Serif", serif; letter-spacing: 0; color: #fff; }
.doc h3 { margin: 0; height: 40.4px; font-size: 18.72px; line-height: 22px; color: #000; }
.doc p { margin: 0; padding: 15.6px 15px 0; height: 48.4px; white-space: nowrap; }
.r { background: #4d0019; } .b { background: #001f4d; } .g { background: #004d0d; }
.escroll { width: 16px; background: #e6e6e6; display: flex; flex-direction: column; align-items: center; padding: 5px 0 6px; }
.escroll i { width: 16px; height: 514px; background: #b8b8b8; margin: 5px 0 auto; }
```
